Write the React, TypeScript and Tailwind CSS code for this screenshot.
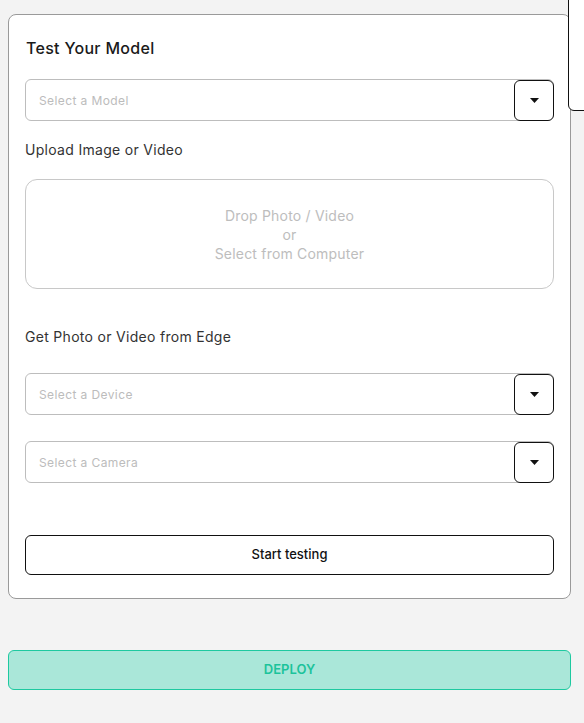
import React from "react";

function Caret() {
  return (
    <svg width="9" height="5" viewBox="0 0 9 5" aria-hidden>
      <path d="M0 0h9L4.5 5z" fill="#111" />
    </svg>
  );
}

function SelectBox({ placeholder }: { placeholder: string }) {
  return (
    <div className="relative h-[42px] w-full">
      <div className="flex h-full w-full items-center rounded-[6px] border border-[#bdbdbd] bg-white pl-[13px] pt-px text-[12px] tracking-[0.4px] text-[#bcbcbc]">
        {placeholder}
      </div>
      <button className="absolute right-0 top-px flex h-[41px] w-[40px] items-center justify-center rounded-[6px] border border-[#111] bg-white">
        <Caret />
      </button>
    </div>
  );
}

export default function App() {
  return (
    <div
      className="relative min-h-[723px] overflow-hidden bg-[#f3f3f3] pt-[14px]"
      style={{ fontFamily: "Inter, 'Noto Sans', sans-serif" }}
    >
      {/* floating panel peeking from the right edge */}
      <div className="absolute left-[568px] top-[-10px] h-[121px] w-[40px] rounded-bl-[6px] border border-[#111] bg-white" />

      <div className="ml-2 w-[563px]">
        <section className="rounded-lg border border-[#9a9a9a] bg-white px-4 pb-[23px] pt-[21px]">
          <h2 className="pl-px text-[16px] font-medium leading-6 tracking-[0.3px] text-[#1a1a1a]">
            Test Your Model
          </h2>
          <div className="mt-[19px]">
            <SelectBox placeholder="Select a Model" />
          </div>
          <p className="mt-[19px] text-[14px] leading-5 tracking-[0.3px] text-[#333]">
            Upload Image or Video
          </p>
          <div className="mt-[19px] flex h-[110px] flex-col items-center justify-center rounded-[12px] border border-[#c8c8c8] text-center text-[14px] leading-[19px] tracking-[0.2px] text-[#bdbdbd]">
            <span>Drop Photo / Video</span>
            <span>or</span>
            <span>Select from Computer</span>
          </div>
          <p className="mt-[38px] text-[14px] leading-5 tracking-[0.3px] text-[#333]">
            Get Photo or Video from Edge
          </p>
          <div className="mt-[26px]">
            <SelectBox placeholder="Select a Device" />
          </div>
          <div className="mt-[26px]">
            <SelectBox placeholder="Select a Camera" />
          </div>
          <button className="mt-[52px] flex h-[40px] w-full items-center justify-center rounded-[6px] border border-[#111] bg-white text-[13px] font-medium text-[#111]">
            Start testing
          </button>
        </section>

        <button className="mt-[51px] flex h-[40px] w-full items-center justify-center rounded-[6px] border border-[#1ec9a0] bg-[#aae7d9] text-[13px] font-semibold text-[#1cc39b]">
          DEPLOY
        </button>
      </div>
    </div>
  );
}
